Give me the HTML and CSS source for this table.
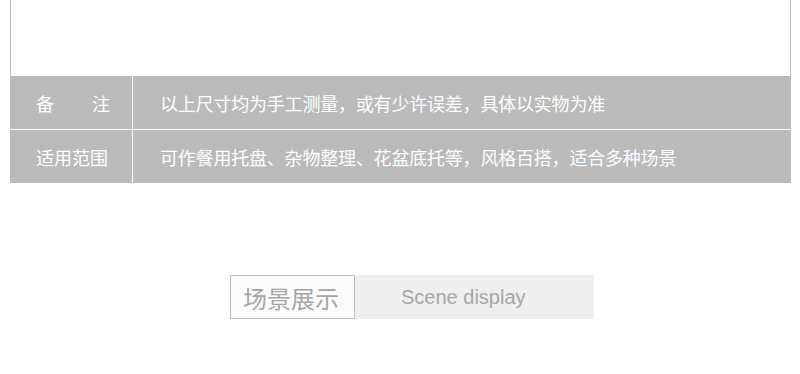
FILE: index.html
```html
<!DOCTYPE html>
<html lang="zh-CN">
<head>
    <meta charset="UTF-8">
    <title>场景展示</title>
    <link rel="stylesheet" href="styles.css">
</head>
<body>
    <div class="page">
        <!-- 尺寸图区域 -->
        <div class="photo-box"></div>

        <div class="spec-table">
            <div class="spec-label"><span class="justify">备注</span></div>
            <div class="spec-value">以上尺寸均为手工测量，或有少许误差，具体以实物为准</div>
            <div class="spec-label">适用范围</div>
            <div class="spec-value">可作餐用托盘、杂物整理、花盆底托等，风格百搭，适合多种场景</div>
        </div>

        <div class="section-title">
            <div class="title-cn">场景展示</div>
            <div class="title-en">Scene display</div>
        </div>
    </div>
</body>
</html>
```

FILE: styles.css
```css
:root {
    --cell-bg: #bababa;
    --line-color: #bdbdbd;
    --title-bg: #efefef;
    --title-color: #a6a6a6;
}

body {
    margin: 0;
    background: #fff;
    font-family: "Liberation Sans", "Noto Sans CJK SC", sans-serif;
}

.page {
    width: 800px;
    padding-left: 10px;
    box-sizing: border-box;
}

.photo-box {
    width: 781px;
    height: 76px;
    box-sizing: border-box;
    border-left: 1px solid var(--line-color);
    border-right: 1px solid var(--line-color);
}

.spec-table {
    width: 781px;
    display: grid;
    grid-template-columns: 122px 1fr;
    grid-auto-rows: 53px;
    gap: 1px;
    background: #fff;
}

.spec-label,
.spec-value {
    background: var(--cell-bg);
    color: #fff;
    font-size: 18px;
    display: flex;
    align-items: center;
}

.spec-label {
    justify-content: center;
    padding-left: 2px;
}

.spec-label .justify {
    width: 74px;
    text-align: justify;
    text-align-last: justify;
    margin-left: 2px;
}

.spec-value {
    padding-left: 27px;
    letter-spacing: -0.2px;
}

.section-title {
    display: flex;
    margin: 92px 0 0 220px;
    height: 44px;
}

.title-cn {
    width: 125px;
    box-sizing: border-box;
    border: 1px solid var(--line-color);
    background: #fbfbfb;
    color: var(--title-color);
    font-size: 24px;
    display: flex;
    align-items: center;
    justify-content: center;
    padding-right: 3px;
}

.title-en {
    width: 239px;
    background: var(--title-bg);
    color: var(--title-color);
    font-size: 20px;
    display: flex;
    align-items: center;
    padding-left: 46px;
    box-sizing: border-box;
}
```
